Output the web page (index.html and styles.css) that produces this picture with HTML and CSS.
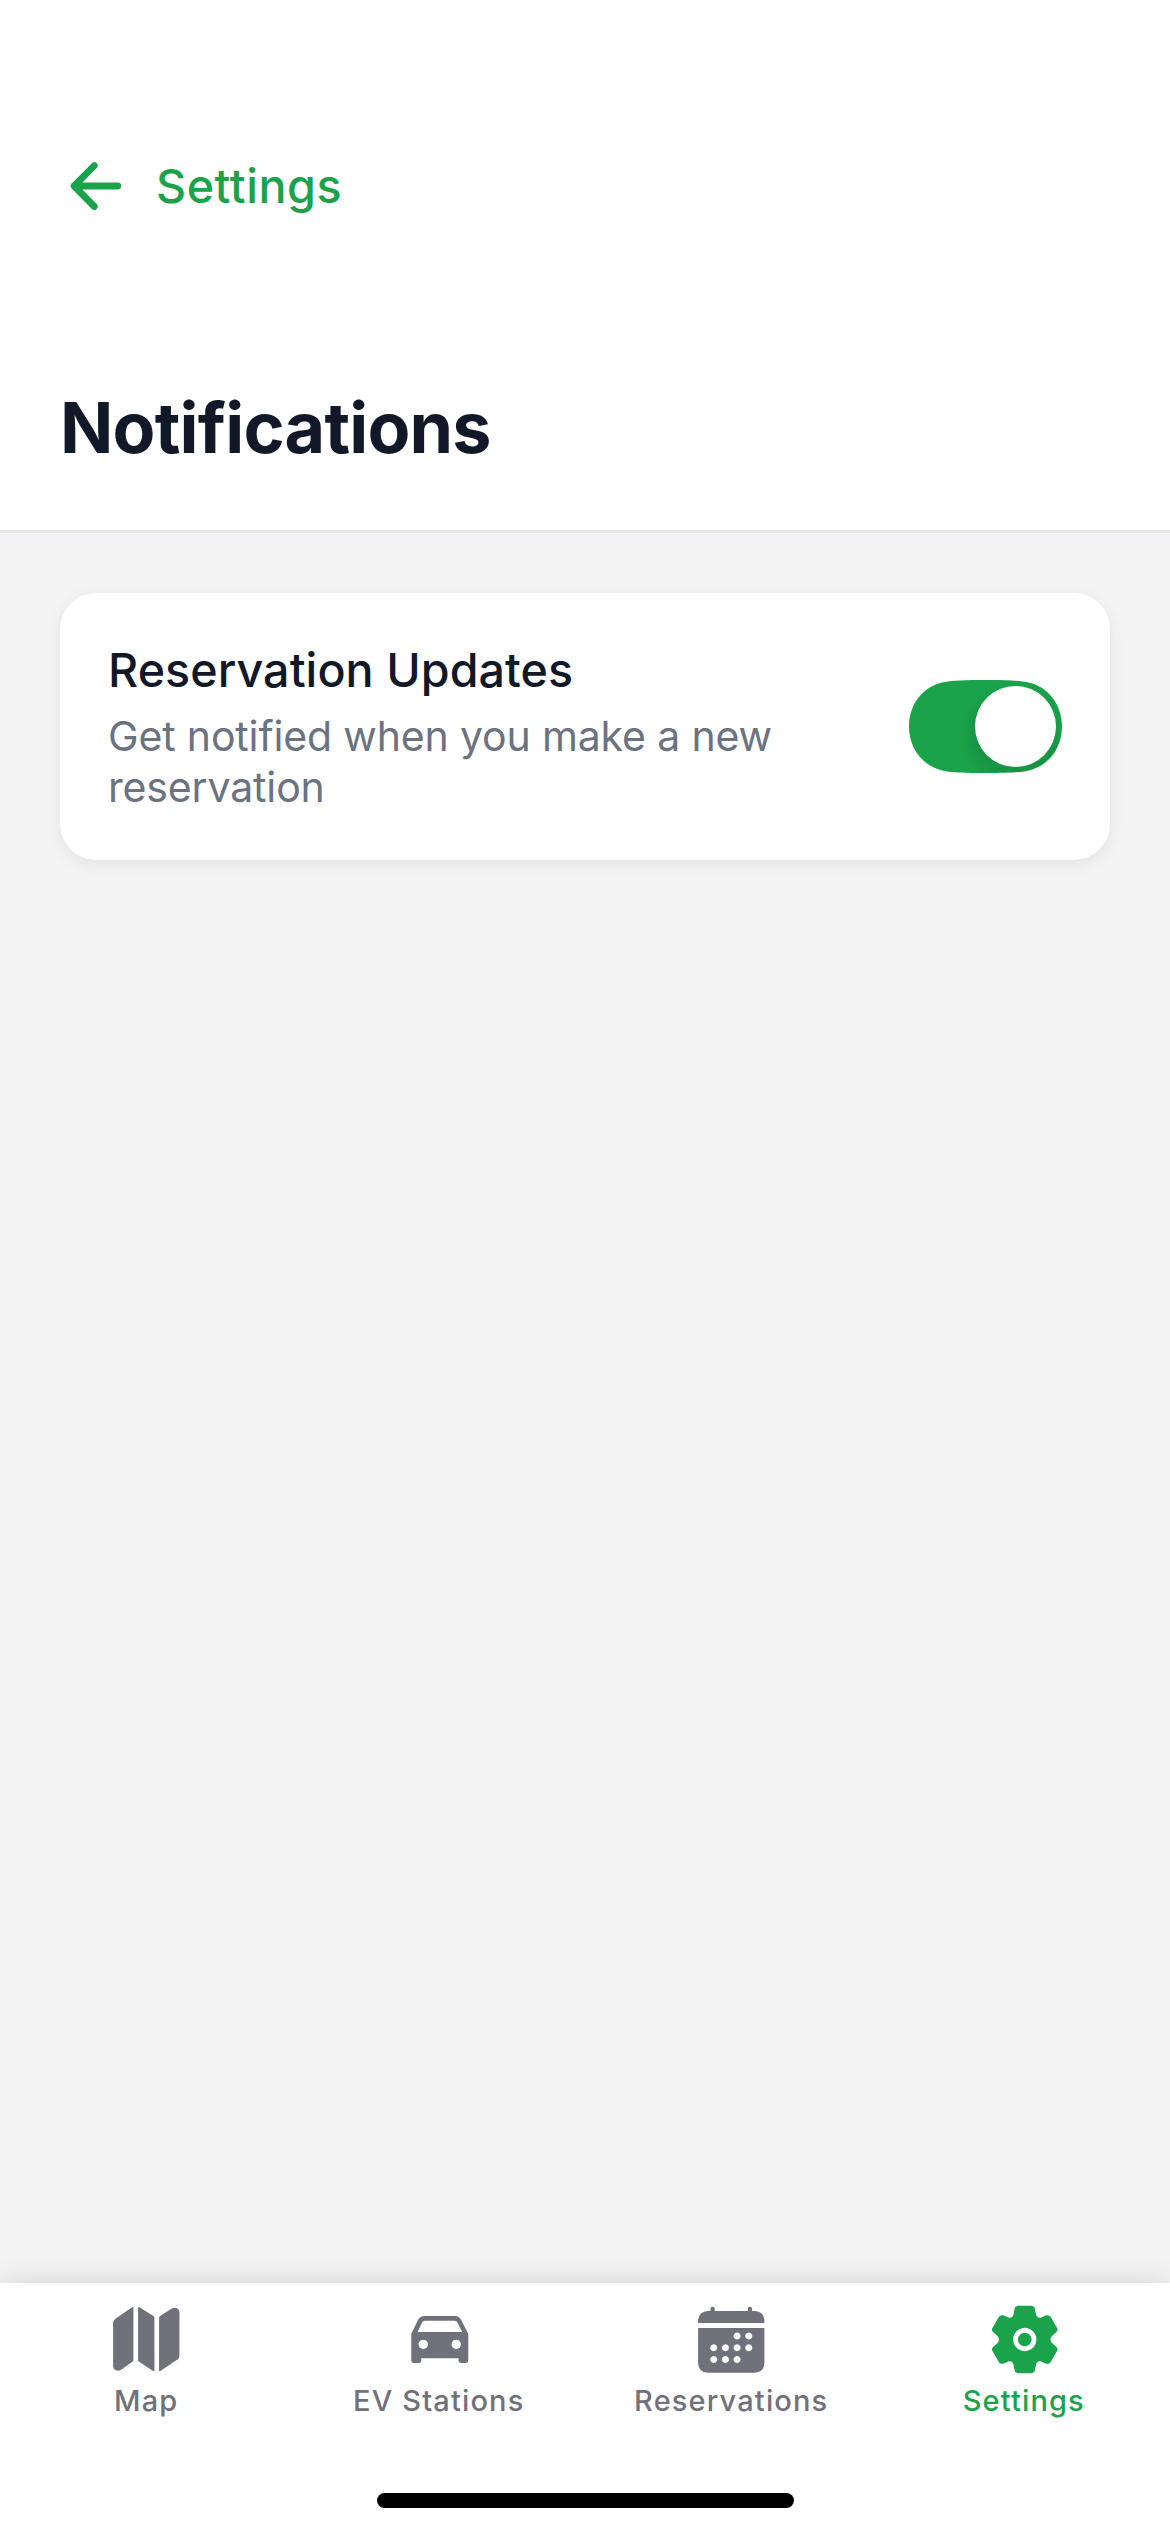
FILE: index.html
```html
<!DOCTYPE html>
<html lang="en">
<head>
<meta charset="utf-8">
<title>Notifications</title>
<link rel="stylesheet" href="styles.css">
</head>
<body>
<div class="screen">
  <header class="header">
    <a class="back">
      <svg class="back-icon" viewBox="0 0 72 72">
        <path d="M34.3 15.7 14.1 36l20.2 20.5M14.1 36H57.7"/>
      </svg>
      <span class="back-label">Settings</span>
    </a>
    <h1 class="title">Notifications</h1>
  </header>

  <main class="content">
    <section class="card">
      <div class="card-text">
        <h2 class="card-title">Reservation Updates</h2>
        <p class="card-desc">Get notified when you make a new<br>reservation</p>
      </div>
      <div class="switch" role="switch" aria-checked="true" aria-label="Reservation Updates">
        <svg class="switch-track" viewBox="0 0 459 279">
          <path d="M0 139.5C0 78 38 20 103 7C130 1 170 0 230 0S329 1 356 7C421 20 459 78 459 139.5S421 259 356 272C329 278 289 279 229 279S130 278 103 272C38 259 0 201 0 139.5Z"/>
        </svg>
        <span class="switch-thumb"></span>
      </div>
    </section>
  </main>

  <nav class="tabs">
    <a class="tab">
      <svg class="tab-icon" viewBox="60.75 129 216 216">
        <path d="M131 144V303L94 329Q83 336 74 328Q70 324 70 318V189Q70 181 77 176L127 142Q131 140 131 144Z"/>
        <path d="M145 144Q145 140 149 142L191 168Q194 170 194 174V331Q194 335 190 333L145 303Z"/>
        <path d="M208 174Q208 170 211 168L245 146Q254 141 262 145Q269 149 269 157V288Q269 294 264 298L212 333Q208 335 208 331Z"/>
      </svg>
      <span class="tab-label">Map</span>
    </a>
    <a class="tab">
      <svg class="tab-icon" viewBox="188.25 129 216 216">
        <path fill-rule="evenodd" d="M253 168H344Q357 168 363 180L384 222V301Q384 309 376 309H363Q355 309 355 301V295H243V301Q243 309 235 309H221Q213 309 213 301V222L233 180Q240 168 253 168ZM254 182Q248 182 246 187L232 216H366L351 187Q349 182 343 182ZM249 239a14 14 0 1 0 .01 0ZM348 239a14 14 0 1 0 .01 0Z"/>
      </svg>
      <span class="tab-label">EV Stations</span>
    </a>
    <a class="tab">
      <svg class="tab-icon" viewBox="225.75 129 216 216">
        <path d="M235 189V181Q237 154 265 153H272V147a6.5 7 0 0 1 13 0V153H384V147a6.5 7 0 0 1 13 0V153H404Q432 154 434 181V189Z"/>
        <path fill-rule="evenodd" d="M235 204H434V309Q433 337 405 338H264Q236 337 235 309ZM352 217.500a10.500 10.500 0 1 0 .01 0ZM387 217.500a10.500 10.500 0 1 0 .01 0ZM282 252.500a10.500 10.500 0 1 0 .01 0ZM317 252.500a10.500 10.500 0 1 0 .01 0ZM352 252.500a10.500 10.500 0 1 0 .01 0ZM387 252.500a10.500 10.500 0 1 0 .01 0ZM282 288a10.500 10.500 0 1 0 .01 0ZM317 288a10.500 10.500 0 1 0 .01 0ZM352 288a10.500 10.500 0 1 0 .01 0Z"/>
      </svg>
      <span class="tab-label">Reservations</span>
    </a>
    <a class="tab tab-active">
      <svg class="tab-icon" viewBox="143.25 129 216 216">
        <path fill-rule="evenodd" d="M232 137H275Q283 138 284 146L287 162Q289 174 301 173L318 166Q326 164 331 170L351 205Q354 212 348 217L336 227Q325 238.500 336 250L348 260Q354 265 351 272L331 307Q326 313 318 311L301 304Q289 303 287 315L284 331Q283 339 275 340H232Q224 339 223 331L220 315Q218 303 206 304L189 311Q181 313 176 307L156 272Q153 265 159 260L171 250Q182 238.500 171 227L159 217Q153 212 156 205L176 170Q181 164 189 166L206 173Q218 174 220 162L223 146Q224 138 232 137ZM253.500 203.500a35 35 0 1 0 .01 0Z"/>
        <circle cx="253.500" cy="238.500" r="20.500"/>
      </svg>
      <span class="tab-label">Settings</span>
    </a>
  </nav>
  <div class="home"><span class="home-bar"></span></div>
</div>
</body>
</html>
```
FILE: styles.css
```css
* { box-sizing: border-box; margin: 0; padding: 0; }

body {
  background: #fff;
  font-family: Inter, "Liberation Sans", sans-serif;
}

.screen {
  width: 1170px;
  height: 2532px;
  display: flex;
  flex-direction: column;
  background: #f4f4f4;
  overflow: hidden;
}

.header {
  height: 533px;
  padding: 150px 60px 0;
  display: flex;
  flex-direction: column;
  background: #fff;
  border-bottom: 3px solid #e5e7eb;
}

.back {
  display: flex;
  align-items: center;
  gap: 24px;
  height: 72px;
  color: #1aa34a;
}

.back-icon {
  width: 72px;
  height: 72px;
  fill: none;
  stroke: currentColor;
  stroke-width: 6.8;
  stroke-linecap: round;
  stroke-linejoin: round;
}

.back-label {
  font-size: 46.6px;
  font-weight: 500;
  line-height: 72px;
  letter-spacing: 0.57px;
}

.title {
  margin-top: 161px;
  color: #111827;
  font-size: 70px;
  font-weight: 700;
  line-height: 90px;
  letter-spacing: -0.8px;
}

.content {
  flex: 1;
  padding: 60px;
}

.card {
  height: 267px;
  padding: 0 48px;
  display: flex;
  align-items: center;
  justify-content: space-between;
  background: #fff;
  border-radius: 36px;
  box-shadow: 0 4px 16px rgba(0, 0, 0, 0.08);
}

.card-title {
  color: #111827;
  font-size: 46.6px;
  font-weight: 500;
  line-height: 60px;
  letter-spacing: 0.08px;
}

.card-desc {
  margin-top: 10.5px;
  color: #6b7280;
  font-size: 41px;
  line-height: 51px;
  letter-spacing: -0.15px;
}

.switch {
  position: relative;
  width: 153px;
  height: 93px;
}

.switch-track {
  display: block;
  width: 153px;
  height: 93px;
  fill: #1aa34a;
}

.switch::after {
  content: "";
  position: absolute;
  inset: 0;
  border-radius: 46px;
  background: radial-gradient(circle at 105px 56px, rgba(0, 0, 0, 0.09) 38px, transparent 54px);
}

.switch-thumb {
  position: absolute;
  z-index: 1;
  top: 6px;
  right: 6px;
  width: 81px;
  height: 81px;
  border-radius: 50%;
  background: #fff;
}

.tabs {
  height: 187px;
  padding-top: 20px;
  display: flex;
  background: #fff;
  box-shadow: 0 0 30px rgba(0, 0, 0, 0.14);
}

.tab {
  flex: 1;
  display: flex;
  flex-direction: column;
  align-items: center;
  color: #71717a;
}

.tab-active { color: #1aa34a; }

.tab-icon {
  width: 72px;
  height: 72px;
  fill: currentColor;
}

.tab-label {
  margin-top: 7.5px;
  font-size: 29px;
  font-weight: 450;
  line-height: 36px;
  letter-spacing: 1.15px;
}

.home {
  position: relative;
  height: 62px;
  padding-top: 23px;
  background: #fff;
}

.home-bar {
  display: block;
  width: 417px;
  height: 15px;
  margin: 0 auto;
  border-radius: 7.5px;
  background: #000;
}
```
